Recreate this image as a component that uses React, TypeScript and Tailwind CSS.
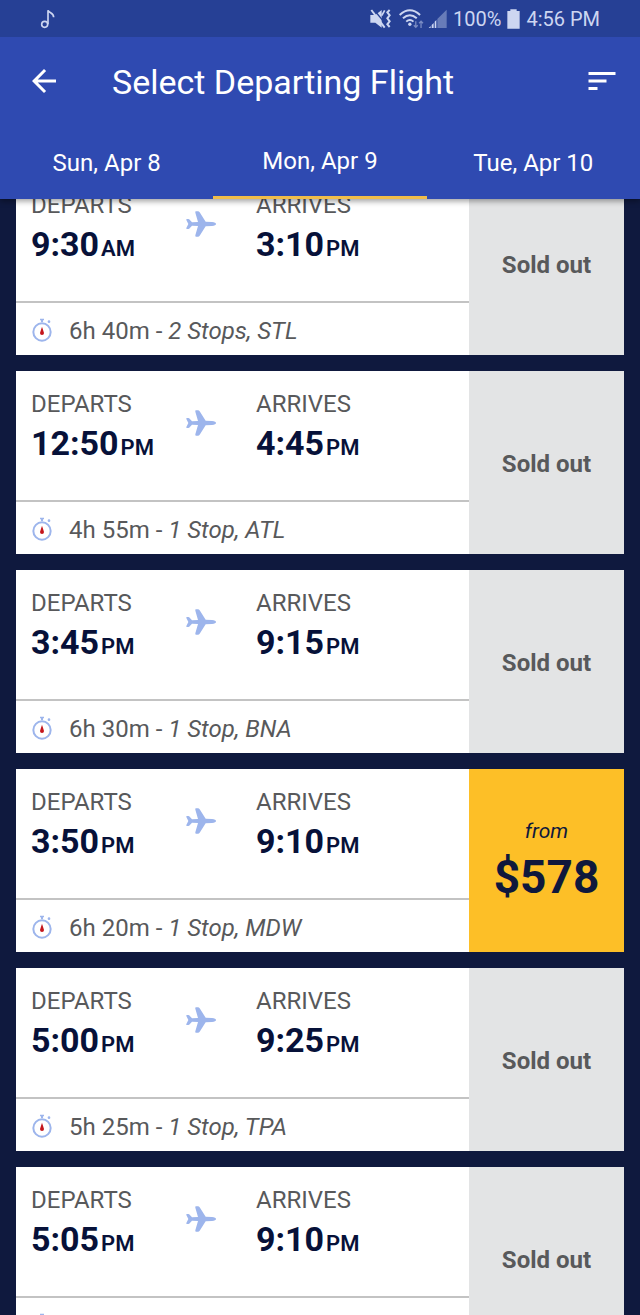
import React, { useState } from 'react';
import { MdArrowBack, MdSort } from 'react-icons/md';

interface Flight {
  id: number;
  departs: string;
  departsPeriod: string;
  arrives: string;
  arrivesPeriod: string;
  duration: string;
  stops: string;
  price?: string;
}

const DAYS = ['Sun, Apr 8', 'Mon, Apr 9', 'Tue, Apr 10'];

const FLIGHTS: Flight[] = [
  { id: 1, departs: '9:30', departsPeriod: 'AM', arrives: '3:10', arrivesPeriod: 'PM', duration: '6h 40m', stops: '2 Stops, STL' },
  { id: 2, departs: '12:50', departsPeriod: 'PM', arrives: '4:45', arrivesPeriod: 'PM', duration: '4h 55m', stops: '1 Stop, ATL' },
  { id: 3, departs: '3:45', departsPeriod: 'PM', arrives: '9:15', arrivesPeriod: 'PM', duration: '6h 30m', stops: '1 Stop, BNA' },
  { id: 4, departs: '3:50', departsPeriod: 'PM', arrives: '9:10', arrivesPeriod: 'PM', duration: '6h 20m', stops: '1 Stop, MDW', price: '$578' },
  { id: 5, departs: '5:00', departsPeriod: 'PM', arrives: '9:25', arrivesPeriod: 'PM', duration: '5h 25m', stops: '1 Stop, TPA' },
  { id: 6, departs: '5:05', departsPeriod: 'PM', arrives: '9:10', arrivesPeriod: 'PM', duration: '', stops: '' },
];

function PlaneIcon() {
  return (
    <svg viewBox="0 0 90 78" className="h-[26px] w-[30px] shrink-0" fill="#9db5ec" aria-hidden="true">
      <path d="M90 39q0-5-12-6l-19-1L41 4q-2-3-5-3h-6q-3 0-2 4l8 28-18 1-7-8q-1-2-4-2H3q-3 0-2 3l6 12-6 12q-1 3 2 3h4q3 0 4-2l7-8 18 1-8 28q-1 4 2 4h6q3 0 5-3l18-28 19-1q12-1 12-6z" />
    </svg>
  );
}

function StopwatchIcon() {
  return (
    <svg viewBox="0 0 60 72" className="h-6 w-5 shrink-0" aria-hidden="true">
      <circle cx="30" cy="42" r="26" fill="none" stroke="#9db5ec" strokeWidth="6" />
      <path d="M24 2h12v5h-3v5h-6V7h-3z" fill="#9db5ec" />
      <circle cx="51" cy="11" r="4" fill="#9db5ec" />
      <path d="M30 26l6 19a6 6 0 1 1-12 0z" fill="#c4161c" />
    </svg>
  );
}

function StatusBar() {
  return (
    <div className="flex h-[37px] items-center justify-between bg-[#264095] px-10 text-[#cdd6f1]">
      <svg viewBox="0 0 48 60" className="h-5 w-4" fill="none" stroke="currentColor" strokeWidth="5" aria-hidden="true">
        <circle cx="14" cy="46" r="9" />
        <path d="M24 46V4c4 9 17 7 17 21" />
      </svg>
      <div className="flex items-center">
        {/* muted / vibrate */}
        <svg viewBox="0 0 63 60" className="h-5 w-[21px]" aria-hidden="true">
          <path d="M1 18h15L35 3v53L16 41H1z" fill="currentColor" />
          <path d="M10 0l38 46" stroke="#264095" strokeWidth="4" />
          <path d="M4 3l40 53" stroke="currentColor" strokeWidth="6" />
          <path d="M44 4L35 20" stroke="currentColor" strokeWidth="5" />
          <path d="M59 3l-7 7 7 9-7 9 7 9-7 9 7 8" stroke="currentColor" strokeWidth="6" fill="none" />
        </svg>
        {/* wifi */}
        <svg viewBox="0 0 76 60" className="ml-2 h-5 w-[25px]" fill="none" stroke="currentColor" strokeWidth="6" aria-hidden="true">
          <path d="M2 18Q33-11 64 18M12 28q21-19 42 0M22 38q11-10 22 0" />
          <circle cx="33" cy="46" r="5" fill="currentColor" stroke="none" />
          <path d="M51 37v18m-6-6l6 6 6-6M67 57V37m-6 6l6-6 6 6" strokeWidth="4" opacity="0.5" />
        </svg>
        {/* signal */}
        <svg viewBox="0 0 57 60" className="ml-1 h-5 w-[19px]" fill="currentColor" aria-hidden="true">
          <path d="M56 2v55H28V30z" opacity="0.4" />
          <path d="M2 57l6-6v6zM11 57v-9l6-6v15zM20 57V38l5-5v24z" />
        </svg>
        <span className="ml-1.5 text-[20px] leading-7">100%</span>
        <svg viewBox="0 0 39 60" className="ml-1.5 h-5 w-[13px]" fill="currentColor" aria-hidden="true">
          <path d="M10 1h19v5h9v53H1V6h9z" />
        </svg>
        <span className="ml-1.5 text-[20px] leading-7">4:56 PM</span>
      </div>
    </div>
  );
}

function TimeBlock({ label, time, period }: { label: string; time: string; period: string }) {
  return (
    <div>
      <div className="text-[24px] leading-7 text-[#58595b]">{label}</div>
      <div className="mt-1 text-[34px] leading-[42px] font-bold text-[#071139]">
        {time}
        <span className="ml-0.5 text-[22px] leading-7 font-semibold">{period}</span>
      </div>
    </div>
  );
}

function FlightCard({ flight }: { flight: Flight }) {
  return (
    <li className="flex h-[183px] bg-white">
      <div className="flex min-w-0 flex-1 flex-col">
        <div className="flex h-[129px] pt-[19px] pl-[15px]">
          <div className="w-[155px] shrink-0">
            <TimeBlock label="DEPARTS" time={flight.departs} period={flight.departsPeriod} />
          </div>
          <div className="w-[70px] shrink-0 pt-5">
            <PlaneIcon />
          </div>
          <TimeBlock label="ARRIVES" time={flight.arrives} period={flight.arrivesPeriod} />
        </div>
        <div className="flex flex-1 items-center gap-[17px] border-t-2 border-[#c3c3c3] pt-0.5 pl-4 text-[24px] leading-7 text-[#58595b]">
          <StopwatchIcon />
          {flight.duration && (
            <span className="pt-0.5">
              {flight.duration} - <em>{flight.stops}</em>
            </span>
          )}
        </div>
      </div>
      {flight.price ? (
        <button className="w-[155px] shrink-0 bg-[#fdbf27] text-center text-[#0f183c]">
          <span className="block text-[21px] leading-7 italic">from</span>
          <span className="block pt-1 text-[46px] leading-[56px] font-bold">{flight.price}</span>
        </button>
      ) : (
        <div className="flex w-[155px] shrink-0 items-center justify-center bg-[#e3e4e5] pt-0.5 text-[24px] leading-7 font-bold text-[#58595b]">
          Sold out
        </div>
      )}
    </li>
  );
}

export default function App() {
  const [selectedDay, setSelectedDay] = useState(DAYS[1]);

  return (
    <div className="flex h-screen flex-col overflow-hidden bg-[#0f193e] font-[Roboto,sans-serif]">
      <header className="relative z-10 shrink-0 bg-[#2f4ab1] text-white shadow-[0_2px_6px_rgba(0,0,0,0.4)]">
        <StatusBar />
        <div className="flex h-[88px] items-center pr-5 pl-[26px]">
          <button aria-label="Back">
            <MdArrowBack className="h-9 w-9" />
          </button>
          <h1 className="flex-1 pt-0.5 pl-[50px] text-[34px] leading-10">Select Departing Flight</h1>
          <button aria-label="Sort">
            <MdSort className="h-9 w-9" />
          </button>
        </div>
        <nav className="grid h-[74px] grid-cols-3 text-[24px] leading-7">
          {DAYS.map(day => (
            <button
              key={day}
              onClick={() => setSelectedDay(day)}
              className={day === selectedDay ? 'border-b-3 border-[#f0bd4a]' : 'pt-0.5'}
            >
              {day}
            </button>
          ))}
        </nav>
      </header>

      {/* the list is scrolled slightly under the header */}
      <main className="min-h-0 flex-1 overflow-hidden">
        <ul className="-mt-[27px] flex flex-col gap-4 px-4">
          {FLIGHTS.map(flight => (
            <FlightCard key={flight.id} flight={flight} />
          ))}
        </ul>
      </main>
    </div>
  );
}
